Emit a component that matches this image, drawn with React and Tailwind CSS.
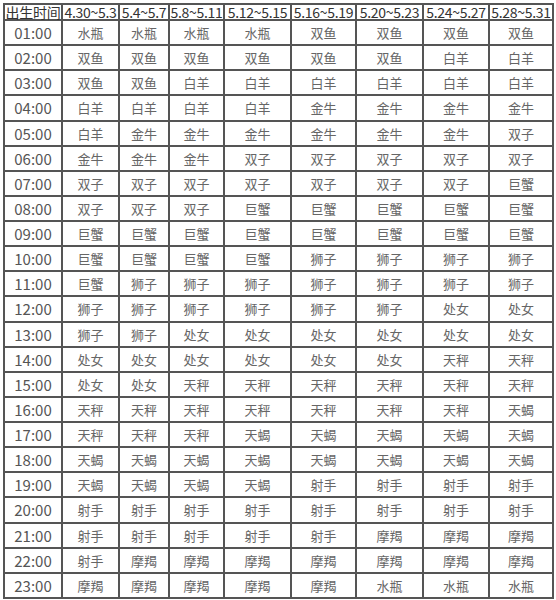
import React from "react";

const headers = ["出生时间", "4.30~5.3", "5.4~5.7", "5.8~5.11", "5.12~5.15", "5.16~5.19", "5.20~5.23", "5.24~5.27", "5.28~5.31"];
const widths = [58, 57, 50, 55, 67, 65, 67, 66, 64];

const rows = [
  ["01:00", "水瓶 水瓶 水瓶 水瓶 双鱼 双鱼 双鱼 双鱼"],
  ["02:00", "双鱼 双鱼 双鱼 双鱼 双鱼 双鱼 白羊 白羊"],
  ["03:00", "双鱼 双鱼 白羊 白羊 白羊 白羊 白羊 白羊"],
  ["04:00", "白羊 白羊 白羊 白羊 金牛 金牛 金牛 金牛"],
  ["05:00", "白羊 金牛 金牛 金牛 金牛 金牛 金牛 双子"],
  ["06:00", "金牛 金牛 金牛 双子 双子 双子 双子 双子"],
  ["07:00", "双子 双子 双子 双子 双子 双子 双子 巨蟹"],
  ["08:00", "双子 双子 双子 巨蟹 巨蟹 巨蟹 巨蟹 巨蟹"],
  ["09:00", "巨蟹 巨蟹 巨蟹 巨蟹 巨蟹 巨蟹 巨蟹 巨蟹"],
  ["10:00", "巨蟹 巨蟹 巨蟹 巨蟹 狮子 狮子 狮子 狮子"],
  ["11:00", "巨蟹 狮子 狮子 狮子 狮子 狮子 狮子 狮子"],
  ["12:00", "狮子 狮子 狮子 狮子 狮子 狮子 处女 处女"],
  ["13:00", "狮子 狮子 处女 处女 处女 处女 处女 处女"],
  ["14:00", "处女 处女 处女 处女 处女 处女 天秤 天秤"],
  ["15:00", "处女 处女 天秤 天秤 天秤 天秤 天秤 天秤"],
  ["16:00", "天秤 天秤 天秤 天秤 天秤 天秤 天秤 天蝎"],
  ["17:00", "天秤 天秤 天秤 天蝎 天蝎 天蝎 天蝎 天蝎"],
  ["18:00", "天蝎 天蝎 天蝎 天蝎 天蝎 天蝎 天蝎 天蝎"],
  ["19:00", "天蝎 天蝎 天蝎 天蝎 射手 射手 射手 射手"],
  ["20:00", "射手 射手 射手 射手 射手 射手 射手 射手"],
  ["21:00", "射手 射手 射手 射手 射手 摩羯 摩羯 摩羯"],
  ["22:00", "射手 摩羯 摩羯 摩羯 摩羯 摩羯 摩羯 摩羯"],
  ["23:00", "摩羯 摩羯 摩羯 摩羯 摩羯 水瓶 水瓶 水瓶"],
];

const App = () => {
  return (
    <div
      className="w-[556px] h-[600px] bg-white pl-[3px] pt-[3px] overflow-hidden"
      style={{ fontFamily: '"Noto Sans CJK SC", "Noto Sans", sans-serif' }}
    >
      <table className="table-fixed border-collapse w-[550px] h-[596px]">
        <colgroup>
          {widths.map((w, i) => (
            <col key={i} style={{ width: w }} />
          ))}
        </colgroup>
        <thead>
          <tr>
            {headers.map((h) => (
              <th
                key={h}
                className="border-2 border-[#555] p-0 text-center font-normal text-[14px] leading-none text-[#333] whitespace-nowrap tracking-[-0.3px]"
              >
                {h}
              </th>
            ))}
          </tr>
        </thead>
        <tbody>
          {rows.map(([time, signs]) => (
            <tr key={time}>
              <td className="border-2 border-[#555] p-0 text-center text-[15px] leading-none text-[#555]">
                {time}
              </td>
              {signs.split(" ").map((s, i) => (
                <td
                  key={i}
                  className="border-2 border-[#555] p-0 text-center text-[13px] leading-none text-[#666]"
                >
                  {s}
                </td>
              ))}
            </tr>
          ))}
        </tbody>
      </table>
    </div>
  );
};

export default App;
